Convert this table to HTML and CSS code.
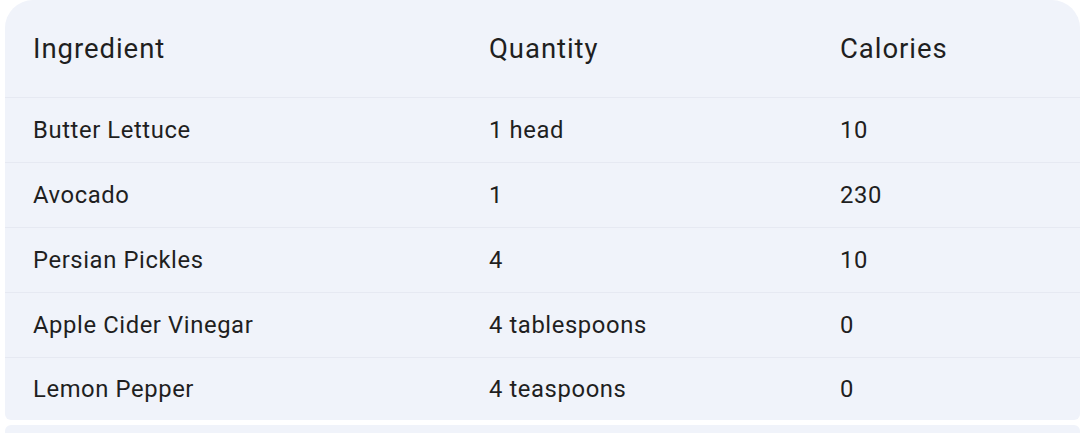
FILE: index.html
```html
<!DOCTYPE html>
<html>
<head>
<meta charset="utf-8">
<link rel="stylesheet" href="styles.css">
</head>
<body>
<div class="page">
  <table class="tbl">
    <thead>
      <tr><th class="c1">Ingredient</th><th class="c2">Quantity</th><th class="c3">Calories</th></tr>
    </thead>
    <tbody>
      <tr><td>Butter Lettuce</td><td>1 head</td><td>10</td></tr>
      <tr><td>Avocado</td><td>1</td><td>230</td></tr>
      <tr><td>Persian Pickles</td><td>4</td><td>10</td></tr>
      <tr><td>Apple Cider Vinegar</td><td>4 tablespoons</td><td>0</td></tr>
      <tr><td>Lemon Pepper</td><td>4 teaspoons</td><td>0</td></tr>
    </tbody>
  </table>
  <div class="next"></div>
</div>
</body>
</html>
```
FILE: styles.css
```css
html, body {
  margin: 0;
  padding: 0;
  background: #ffffff;
}
body {
  width: 1080px;
  height: 433px;
  overflow: hidden;
  font-family: Roboto, "Noto Sans", sans-serif;
  color: #1f1f1f;
}
.page {
  padding-left: 5px;
  display: flex;
  flex-direction: column;
  gap: 5px;
}
.tbl {
  width: 1075px;
  border-collapse: separate;
  border-spacing: 0;
  background: #f0f3fa;
  border-radius: 28px 28px 6px 6px;
  overflow: hidden;
  table-layout: fixed;
}
.c1 { width: 428px; }
.c2 { width: 323px; }
.tbl th {
  text-align: left;
  font-weight: 400;
  font-size: 27.5px;
  line-height: 30px;
  height: 97px;
  padding: 0 0 0 28px;
  border-bottom: 1px solid #e6e9f2;
  letter-spacing: 0.95px;
}
.tbl td {
  font-size: 23.8px;
  line-height: 28px;
  height: 64px;
  padding: 0 0 0 28px;
  border-bottom: 1px solid #e6e9f2;
  letter-spacing: 0.6px;
}
.tbl tbody tr:last-child td {
  border-bottom: none;
  height: 62px;
}
.next {
  height: 20px;
  background: #f0f3fa;
  border-radius: 6px 6px 0 0;
}
```
